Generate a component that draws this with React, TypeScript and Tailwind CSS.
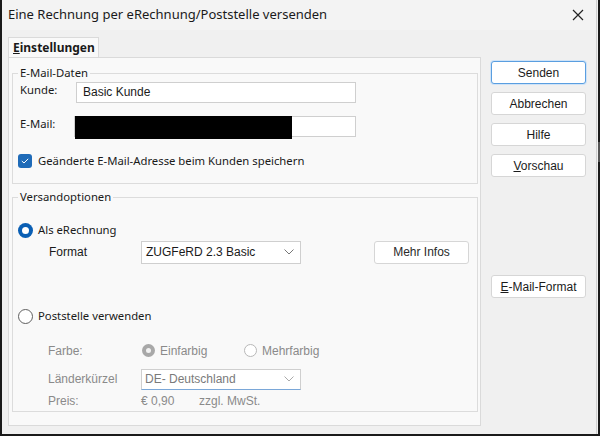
import React from "react";

const seg = { fontFamily: '"Noto Sans", "Open Sans", sans-serif' };
const tah = { fontFamily: '"Liberation Sans", Arial, sans-serif' };

function Btn({ children, focus = false }: { children: React.ReactNode; focus?: boolean }) {
  return (
    <div
      className={`h-[23px] w-[95px] flex items-center justify-center rounded-[3px] bg-white text-[12px] text-[#1b1b1b] ${
        focus ? "border border-[#5a9ee0] shadow-[0_0_0_1px_#cfe3f7]" : "border border-[#d6d6d6]"
      }`}
      style={tah}
    >
      {children}
    </div>
  );
}

function Chevron({ color = "#555" }: { color?: string }) {
  return (
    <svg width="10" height="6" viewBox="0 0 10 6">
      <path d="M0.5 0.5 L5 5 L9.5 0.5" fill="none" stroke={color} strokeWidth="1" />
    </svg>
  );
}

export default function App() {
  return (
    <div className="w-[600px] h-[436px] bg-[#f0f0f0] flex flex-col border-l-2 border-b-2 border-[#1a1a1a] overflow-hidden">
      <div className="flex flex-1 min-h-0">
        <div className="flex-1 flex flex-col min-w-0">
          {/* Title bar */}
          <div className="h-[30px] flex items-center justify-between pl-[6px] pr-[12px] bg-[#f3f3f3]">
            <span className="text-[13px] text-[#1a1a1a]" style={seg}>
              Eine Rechnung per eRechnung/Poststelle versenden
            </span>
            <svg width="12" height="12" viewBox="0 0 12 12">
              <path d="M1 1 L11 11 M11 1 L1 11" stroke="#222" strokeWidth="1.2" />
            </svg>
          </div>
          <div className="flex flex-1 min-h-0">
            {/* Left tab area */}
            <div className="flex flex-col pl-[6px] pt-[7px] w-[480px]">
              <div className="w-[91px] h-[21px] bg-[#f9f9f9] border border-b-0 border-[#dadada] flex items-center pl-[4px]">
                <span className="text-[12px] font-bold text-[#1a1a1a]" style={seg}>
                  <span className="underline">E</span>instellungen
                </span>
              </div>
              <div className="w-[473px] h-[369px] bg-[#f9f9f9] border border-[#dadada] -mt-px pl-[3px] pt-[7px] flex flex-col">
                <fieldset className="w-[466px] h-[119px] border border-[#dcdcdc] px-[5px]" style={seg}>
                  <legend className="text-[11.3px] text-[#1a1a1a] px-[2px] ml-[0px]">E-Mail-Daten</legend>
                  <div className="flex flex-col text-[11.3px]">
                    <div className="flex items-center h-[21px] pl-[2px]">
                      <span className="w-[56px] text-[#1a1a1a] -mt-[3px]">Kunde:</span>
                      <div className="w-[280px] h-[21px] bg-white border border-[#cfcfcf] flex items-center pl-[6px] text-[12px] text-[#1a1a1a]" style={tah}>
                        Basic Kunde
                      </div>
                    </div>
                    <div className="flex items-center h-[21px] mt-[13px] pl-[2px]">
                      <span className="w-[54px] text-[#1a1a1a] -mt-[3px]">E-Mail:</span>
                      <div className="w-[282px] h-[21px] bg-white border border-[#cfcfcf] flex">
                        <div className="w-[217px] h-[23px] -mt-px bg-black" />
                      </div>
                    </div>
                    <div className="flex items-center mt-[16px] gap-[6px]">
                      <div className="w-[14px] h-[14px] rounded-[3px] bg-[#1f6bb8] flex items-center justify-center">
                        <svg width="8" height="6" viewBox="0 0 8 6">
                          <path d="M0.8 3 L3 5 L7.2 0.8" fill="none" stroke="white" strokeWidth="1" />
                        </svg>
                      </div>
                      <span className="text-[#1a1a1a]">Geänderte E-Mail-Adresse beim Kunden speichern</span>
                    </div>
                  </div>
                </fieldset>
                <fieldset className="w-[466px] h-[223px] mt-[5px] border border-[#dcdcdc] px-[5px]" style={seg}>
                  <legend className="text-[11.3px] text-[#1a1a1a] px-[2px]">Versandoptionen</legend>
                  <div className="flex flex-col text-[11.3px]">
                    <div className="flex items-center gap-[5px] mt-[16px]">
                      <div className="w-[15px] h-[15px] rounded-full bg-[#0a5fb4] flex items-center justify-center">
                        <div className="w-[7px] h-[7px] rounded-full bg-white" />
                      </div>
                      <span className="text-[#1a1a1a]">Als eRechnung</span>
                    </div>
                    <div className="flex items-center mt-[2px] ml-[31px]">
                      <span className="w-[92px] text-[12px] text-[#1a1a1a]" style={tah}>Format</span>
                      <div className="w-[160px] h-[23px] bg-white border border-[#cfcfcf] flex items-center justify-between pl-[4px] pr-[6px]">
                        <span className="text-[12px] text-[#1a1a1a]" style={tah}>ZUGFeRD 2.3 Basic</span>
                        <Chevron color="#777" />
                      </div>
                      <div className="ml-[73px] w-[95px] h-[23px] flex items-center justify-center rounded-[3px] bg-white border border-[#d6d6d6] text-[12px] text-[#2a2a2a]" style={tah}>
                        Mehr Infos
                      </div>
                    </div>
                    <div className="flex items-center gap-[5px] mt-[44px]">
                      <div className="w-[15px] h-[15px] rounded-full border border-[#5f5f5f] bg-white" />
                      <span className="text-[#1a1a1a]">Poststelle verwenden</span>
                    </div>
                    <div className="flex items-center mt-[17px] ml-[30px] text-[12px] text-[#8a8a8a]" style={tah}>
                      <span className="w-[94px]">Farbe:</span>
                      <div className="w-[13px] h-[13px] rounded-full bg-[#a8a8a8] flex items-center justify-center">
                        <div className="w-[5px] h-[5px] rounded-full bg-[#f2f2f2]" />
                      </div>
                      <span className="ml-[5px] w-[84px]">Einfarbig</span>
                      <div className="w-[13px] h-[13px] rounded-full border border-[#b8b8b8] bg-white" />
                      <span className="ml-[5px]">Mehrfarbig</span>
                    </div>
                    <div className="flex items-center mt-[9px] ml-[30px] text-[12px] text-[#8a8a8a]" style={tah}>
                      <span className="w-[93px]">Länderkürzel</span>
                      <div className="w-[160px] h-[21px] bg-white border border-[#cfcfcf] border-b-[#7aa7d8] flex items-center justify-between pl-[3px] pr-[6px]">
                        <span className="text-[#7a7a7a]">DE- Deutschland</span>
                        <Chevron color="#aaa" />
                      </div>
                    </div>
                    <div className="flex items-center mt-[2px] ml-[30px] text-[12px] text-[#8a8a8a]" style={tah}>
                      <span className="w-[93px]">Preis:</span>
                      <span className="w-[58px]">€ 0,90</span>
                      <span>zzgl. MwSt.</span>
                    </div>
                  </div>
                </fieldset>
              </div>
            </div>
            {/* Right buttons */}
            <div className="flex flex-col pl-[9px] pt-[31px]">
              <div className="flex flex-col gap-[8px]">
                <Btn focus>Senden</Btn>
                <Btn>Abbrechen</Btn>
                <Btn>Hilfe</Btn>
                <Btn>
                  <span>
                    <span className="underline">V</span>orschau
                  </span>
                </Btn>
              </div>
              <div className="mt-[98px]">
                <Btn>
                  <span>
                    <span className="underline">E</span>-Mail-Format
                  </span>
                </Btn>
              </div>
            </div>
          </div>
        </div>
        {/* right window edge */}
        <div className="w-[4px] flex">
          <div className="w-[1px] bg-[#d0d0d0]" />
          <div className="w-[1px] bg-[#f0f0f0]" />
          <div className="w-[2px] bg-[#1a1a1a] flex flex-col">
            <div className="h-[142px]" />
            <div className="h-[20px] bg-[#555]" />
          </div>
        </div>
      </div>
    </div>
  );
}
